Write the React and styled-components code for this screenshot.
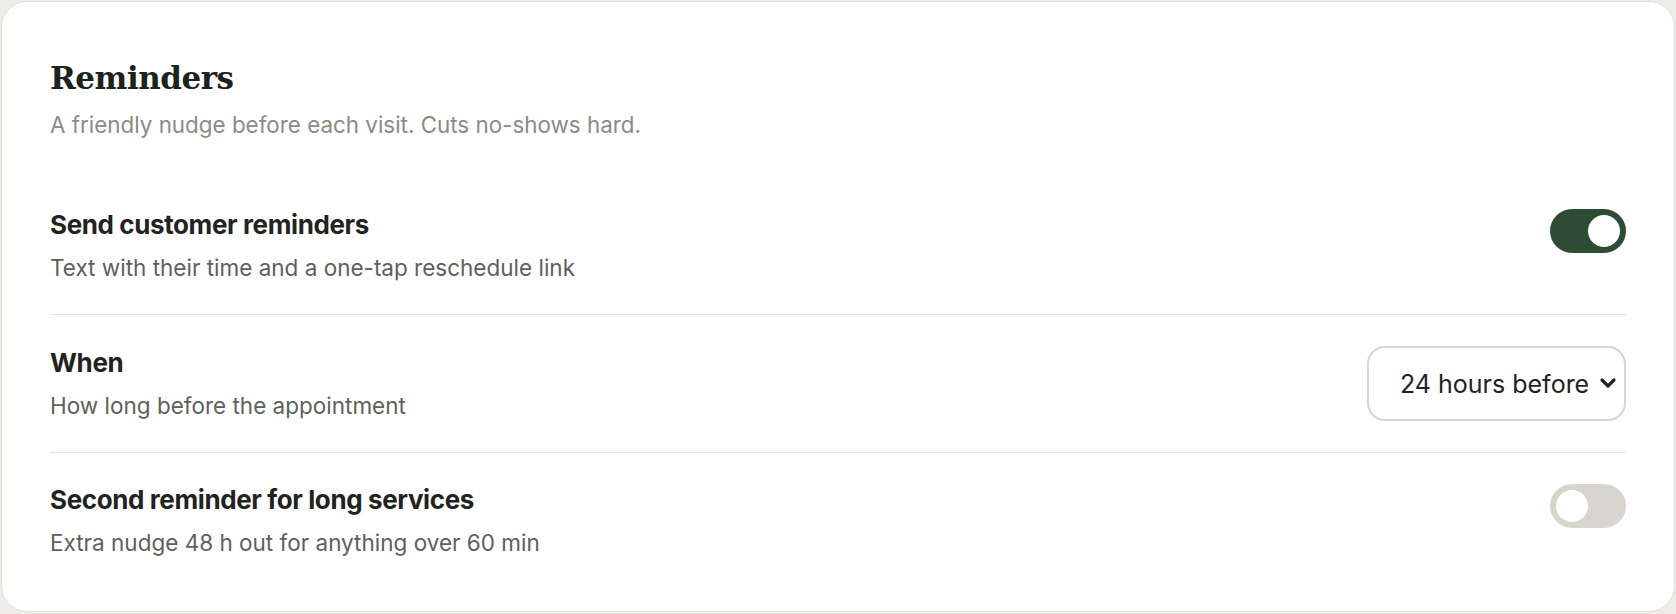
import React, { useState } from 'react'
import styled, { createGlobalStyle } from 'styled-components'

const GlobalStyle = createGlobalStyle`
  html, body {
    margin: 0;
    padding: 0;
    background: #edece8;
  }
  body {
    font-family: Inter, "Noto Sans", sans-serif;
    -webkit-font-smoothing: antialiased;
  }
`

const Page = styled.div`
  padding: 1px;
`

const Card = styled.section`
  background: #fff;
  border: 1px solid #e1dfd9;
  border-radius: 26px;
  padding: 56px 48px 22px;
`

const Title = styled.h2`
  margin: 0;
  font-family: "DejaVu Serif", "Liberation Serif", serif;
  font-weight: 700;
  font-size: 31px;
  line-height: 40px;
  letter-spacing: -0.015em;
  color: #1d221e;
`

const Subtitle = styled.p`
  margin: 12px 0 38px;
  font-size: 22.4px;
  line-height: 30px;
  color: #8b8b83;
`

const Row = styled.div`
  display: flex;
  justify-content: space-between;
  align-items: ${p => (p.center ? 'center' : 'flex-start')};
  gap: 24px;
  padding: 31px 0;
  & + & {
    border-top: 1px solid #e6e4df;
  }
`

const Text = styled.div`
  display: flex;
  flex-direction: column;
`

const Label = styled.div`
  font-size: 26px;
  line-height: 32px;
  font-weight: 700;
  letter-spacing: -0.015em;
  color: #1f2420;
`

const Desc = styled.div`
  margin-top: 12px;
  font-size: 22.5px;
  line-height: 30px;
  color: #5f605a;
`

const Track = styled.button`
  position: relative;
  flex: none;
  width: 76px;
  height: 44px;
  padding: 0;
  border: none;
  border-radius: 22px;
  background: ${p => (p.on ? '#2e4b34' : '#d8d5cf')};
  cursor: pointer;
`

const Knob = styled.span`
  position: absolute;
  top: 6px;
  left: ${p => (p.on ? '38px' : '6px')};
  width: 32px;
  height: 32px;
  border-radius: 50%;
  background: #fff;
`

const SelectWrap = styled.div`
  position: relative;
  flex: none;
`

const Select = styled.select`
  appearance: none;
  width: 259px;
  height: 75px;
  padding: 0 36px 0 31px;
  border: 2px solid #d8d5ce;
  border-radius: 18px;
  background: #fff;
  font-family: Inter, "Noto Sans", sans-serif;
  font-size: 25px;
  color: #1f2420;
  outline: none;
`

const Chevron = styled.svg`
  position: absolute;
  right: 9px;
  top: 50%;
  margin-top: -8px;
  width: 18px;
  height: 14px;
  pointer-events: none;
`

const Toggle = ({ on, onChange }) => (
  <Track on={on ? 1 : 0} onClick={() => onChange(!on)} aria-pressed={on}>
    <Knob on={on ? 1 : 0} />
  </Track>
)

export default function App() {
  const [send, setSend] = useState(true)
  const [second, setSecond] = useState(false)
  const [when, setWhen] = useState('24')

  return (
    <Page>
      <GlobalStyle />
      <Card>
        <Title>Reminders</Title>
        <Subtitle>A friendly nudge before each visit. Cuts no-shows hard.</Subtitle>

        <Row>
          <Text>
            <Label>Send customer reminders</Label>
            <Desc>Text with their time and a one-tap reschedule link</Desc>
          </Text>
          <Toggle on={send} onChange={setSend} />
        </Row>

        <Row center>
          <Text>
            <Label>When</Label>
            <Desc>How long before the appointment</Desc>
          </Text>
          <SelectWrap>
            <Select value={when} onChange={e => setWhen(e.target.value)}>
              <option value="2">2 hours before</option>
              <option value="12">12 hours before</option>
              <option value="24">24 hours before</option>
              <option value="48">48 hours before</option>
            </Select>
            <Chevron viewBox="0 0 18 14">
              <path
                d="M3 4l6 6 6-6"
                fill="none"
                stroke="#1f2420"
                strokeWidth="3.2"
                strokeLinecap="round"
                strokeLinejoin="round"
              />
            </Chevron>
          </SelectWrap>
        </Row>

        <Row>
          <Text>
            <Label>Second reminder for long services</Label>
            <Desc>Extra nudge 48 h out for anything over 60 min</Desc>
          </Text>
          <Toggle on={second} onChange={setSecond} />
        </Row>
      </Card>
    </Page>
  )
}
